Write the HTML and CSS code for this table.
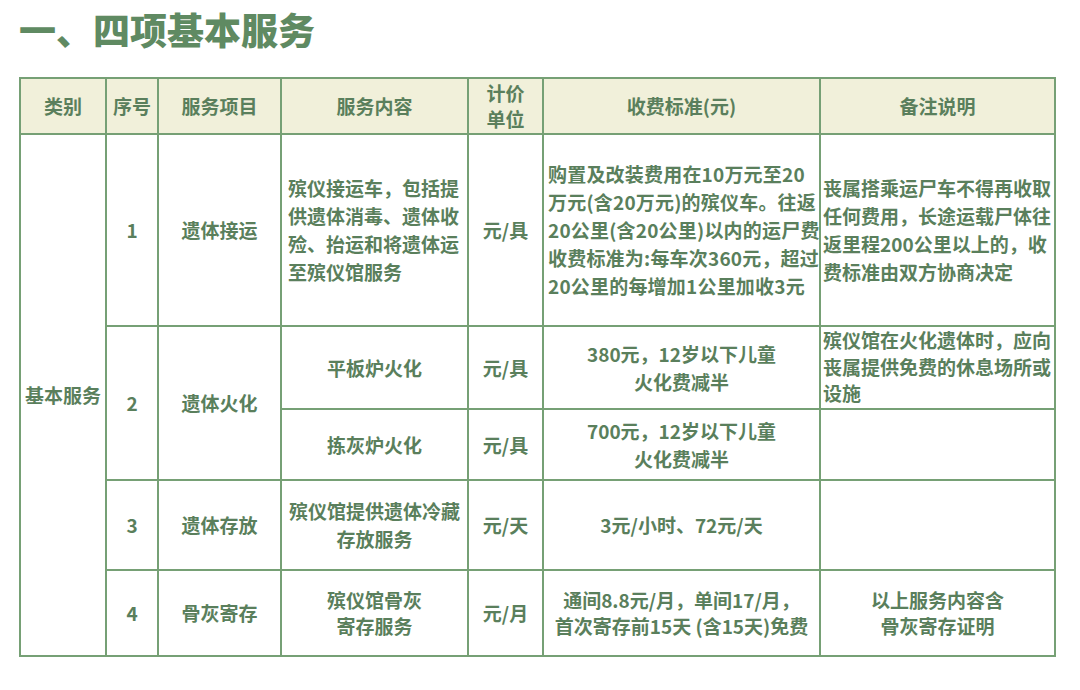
FILE: index.html
```html
<!DOCTYPE html>
<html lang="zh-CN">
<head>
<meta charset="utf-8">
<title>四项基本服务</title>
<link rel="stylesheet" href="styles.css">
</head>
<body>
<h1 class="title">一、四项基本服务</h1>
<table class="fees">
  <colgroup>
    <col class="c-cat"><col class="c-no"><col class="c-item"><col class="c-content"><col class="c-unit"><col class="c-price"><col class="c-note">
  </colgroup>
  <thead>
    <tr class="r-head">
      <th>类别</th>
      <th>序号</th>
      <th>服务项目</th>
      <th>服务内容</th>
      <th class="two">计价<br>单位</th>
      <th>收费标准(元)</th>
      <th>备注说明</th>
    </tr>
  </thead>
  <tbody>
    <tr class="r1">
      <td rowspan="5">基本服务</td>
      <td>1</td>
      <td>遗体接运</td>
      <td class="left">殡仪接运车，包括提<br>供遗体消毒、遗体收<br>殓、抬运和将遗体运<br>至殡仪馆服务</td>
      <td>元/具</td>
      <td class="left price1">购置及改装费用在10万元至20<br>万元(含20万元)的殡仪车。往返<br>20公里(含20公里)以内的运尸费<br>收费标准为:每车次360元，超过<br>20公里的每增加1公里加收3元</td>
      <td class="left note">丧属搭乘运尸车不得再收取<br>任何费用，长途运载尸体往<br>返里程200公里以上的，收<br>费标准由双方协商决定</td>
    </tr>
    <tr class="r2a">
      <td rowspan="2">2</td>
      <td rowspan="2">遗体火化</td>
      <td>平板炉火化</td>
      <td>元/具</td>
      <td>380元，12岁以下儿童<br>火化费减半</td>
      <td class="left note top">殡仪馆在火化遗体时，应向<br>丧属提供免费的休息场所或<br>设施</td>
    </tr>
    <tr class="r2b">
      <td>拣灰炉火化</td>
      <td>元/具</td>
      <td>700元，12岁以下儿童<br>火化费减半</td>
      <td></td>
    </tr>
    <tr class="r3">
      <td>3</td>
      <td>遗体存放</td>
      <td>殡仪馆提供遗体冷藏<br>存放服务</td>
      <td>元/天</td>
      <td>3元/小时、72元/天</td>
      <td></td>
    </tr>
    <tr class="r4">
      <td>4</td>
      <td>骨灰寄存</td>
      <td class="tight">殡仪馆骨灰<br>寄存服务</td>
      <td>元/月</td>
      <td class="tight">通间8.8元/月，单间17/月，<br>首次寄存前15天 (含15天)免费</td>
      <td class="tight">以上服务内容含<br>骨灰寄存证明</td>
    </tr>
  </tbody>
</table>
</body>
</html>
```

FILE: styles.css
```css
html, body {
  margin: 0;
  padding: 0;
  background: #ffffff;
}

body {
  padding: 0 0 0 19px;
  font-family: "Noto Sans CJK SC", "Noto Sans", sans-serif;
  color: #5a7f5c;
}

.title {
  margin: 0;
  height: 77px;
  padding-top: 0;
  font-size: 37px;
  line-height: 58px;
  font-weight: 900;
  color: #5f8a62;
  letter-spacing: 0;
}

.fees {
  border-collapse: collapse;
  table-layout: fixed;
  width: 1036px;
  font-size: 19px;
  font-weight: 700;
  line-height: 28px;
}

.c-cat { width: 86px; }
.c-no { width: 52px; }
.c-item { width: 123px; }
.c-content { width: 187px; }
.c-unit { width: 75px; }
.c-price { width: 277px; }
.c-note { width: 235px; }

.fees th,
.fees td {
  border: 2px solid #76a075;
  padding: 0 4px;
  text-align: center;
  vertical-align: middle;
  white-space: nowrap;
  overflow: visible;
}

.fees th {
  background: #f1f0da;
  font-weight: 700;
}

.fees th.two {
  line-height: 26px;
}

.r-head { height: 56px; }
.r1 { height: 192px; }
.r2a { height: 83px; }
.r2b { height: 71px; }
.r3 { height: 90px; }
.r4 { height: 86px; }

.fees td.left {
  text-align: left;
  padding-left: 6px;
}

.fees td.price1 {
  padding-left: 4px;
  letter-spacing: 0.2px;
}

.fees td.note {
  padding-left: 2px;
  padding-right: 0;
}

.fees td.top {
  vertical-align: top;
  line-height: 26.5px;
}

.fees td.tight {
  line-height: 26px;
}
```
